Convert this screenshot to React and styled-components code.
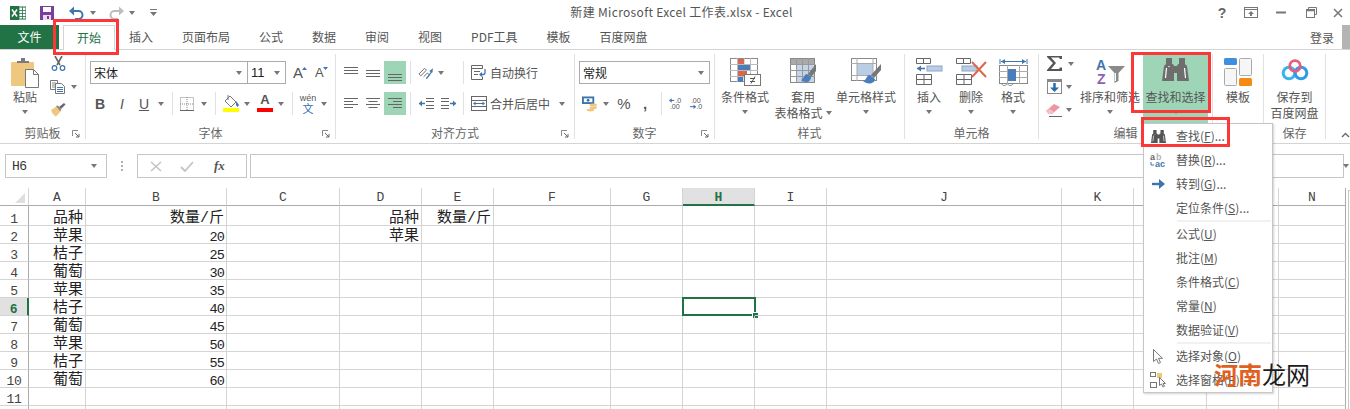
import { Fragment } from "react";
import styled, { createGlobalStyle } from "styled-components";

const GlobalStyle = createGlobalStyle`
  html, body {
    margin: 0;
    padding: 0;
    background: #fff;
    overflow: hidden;
  }
  body {
    font-family: "Noto Sans CJK SC", "Liberation Sans", sans-serif;
    font-size: 12px;
    color: #444;
  }
`;

const Page = styled.div`
  position: relative;
  width: 1350px;
  height: 409px;
  overflow: hidden;
  background: #fff;
`;

/* title bar */
const TitleBar = styled.div`
  position: relative;
  height: 25px;
  display: flex;
  align-items: center;
`;

const QuickAccess = styled.div`
  display: flex;
  align-items: center;
  padding-left: 10px;
`;

const QuickTool = styled.div`
  display: flex;
  margin-left: ${(p) => p.$ml || 0}px;
`;

const TitleText = styled.div`
  position: absolute;
  left: 0;
  right: 0;
  top: 3px;
  padding-left: 13px;
  text-align: center;
  line-height: 18px;
  color: #555;
  font-size: 12px;
  letter-spacing: 0.33px;
`;

const WindowControls = styled.div`
  margin-left: auto;
  display: flex;
  align-items: center;
  gap: 0;
  color: #666;
`;

const WindowButton = styled.div`
  width: ${(p) => p.$w || 30}px;
  display: flex;
  justify-content: center;
  font-family: "Liberation Sans", sans-serif;
  font-weight: 700;
  font-size: 14px;
  line-height: 16px;
`;

/* tabs */
const TabRow = styled.div`
  height: 25px;
  box-sizing: border-box;
  display: flex;
  align-items: stretch;
  position: relative;
  border-bottom: 1px solid #d4d4d4;
`;

const FileTab = styled.div`
  width: 59px;
  padding-bottom: 1px;
  box-sizing: border-box;
  background: #217346;
  color: #fff;
  display: flex;
  align-items: center;
  justify-content: center;
`;

const ActiveTab = styled.div`
  width: 52px;
  margin-left: 4px;
  margin-bottom: -1px;
  padding-bottom: 2px;
  box-sizing: border-box;
  background: #fff;
  border: 1px solid #d4d4d4;
  border-bottom: none;
  color: #217346;
  display: flex;
  align-items: center;
  justify-content: center;
`;

const TabList = styled.div`
  display: flex;
  gap: 29px;
  align-items: center;
  margin-left: 14px;
  padding-bottom: 2px;
  color: #555;
`;

const UserArea = styled.div`
  margin-left: auto;
  display: flex;
  align-items: center;
  gap: 8px;
  color: #555;
`;

const Avatar = styled.div`
  width: 8px;
  height: 24px;
  background: #b4b4b4;
`;

/* ribbon */
const Ribbon = styled.div`
  height: 94px;
  padding-top: 4px;
  box-sizing: border-box;
  display: flex;
  border-bottom: 1px solid #d4d4d4;
`;

const Group = styled.section`
  width: ${(p) => p.$w}px;
  height: 85px;
  box-sizing: border-box;
  border-right: 1px solid #e1e1e1;
  display: flex;
  flex-direction: column;
  flex-shrink: 0;
`;

const GroupBody = styled.div`
  height: 72px;
  display: flex;
  padding-left: ${(p) => p.$pl || 0}px;
`;

const RowsBody = styled.div`
  height: 72px;
  padding: 7px 0 0 4px;
  box-sizing: border-box;
  display: flex;
  flex-direction: column;
  gap: 8px;
`;

const ToolRow = styled.div`
  height: 23px;
  display: flex;
  align-items: center;
`;

const GroupLabel = styled.div`
  height: 13px;
  line-height: 13px;
  display: grid;
  grid-template-columns: 1fr auto 1fr;
  align-items: center;
  color: #666;
`;

const LabelText = styled.span`
  grid-column: 2;
  white-space: nowrap;
`;

const Launcher = styled.svg`
  grid-column: 3;
  justify-self: end;
  width: 8px;
  height: 8px;
  margin: 3px 5px 0 0;
`;

const BigButton = styled.div`
  width: ${(p) => p.$w}px;
  margin-left: ${(p) => p.$ml || 0}px;
  flex-shrink: 0;
  display: flex;
  flex-direction: column;
  align-items: center;
  padding-top: 4px;
  box-sizing: border-box;
  background: ${(p) => (p.$on ? "#9fd5b7" : "transparent")};
  color: #555;
`;

const BigIcon = styled.div`
  height: 31px;
  display: flex;
  justify-content: center;
`;

const BigLabel = styled.div`
  line-height: 16px;
  text-align: center;
  white-space: nowrap;
  display: flex;
  align-items: center;
  gap: 3px;
`;

const Caret = styled.i`
  display: block;
  flex-shrink: 0;
  width: 0;
  height: 0;
  border-left: 3.5px solid transparent;
  border-right: 3.5px solid transparent;
  border-top: 4px solid #777;
  margin-left: ${(p) => p.$ml || 0}px;
  margin-top: ${(p) => p.$mt || 0}px;
`;

const Stack = styled.div`
  width: ${(p) => p.$w}px;
  margin-top: -2px;
  padding-left: ${(p) => p.$pl || 0}px;
  box-sizing: border-box;
  flex-shrink: 0;
`;

const Tool = styled.div`
  width: ${(p) => p.$w || 16}px;
  height: 23px;
  margin-left: ${(p) => p.$ml || 0}px;
  flex-shrink: 0;
  display: flex;
  align-items: center;
  justify-content: center;
  background: ${(p) => (p.$on ? "#9fd5b7" : "transparent")};
  color: #555;
`;

const Sep = styled.div`
  width: 1px;
  height: 23px;
  margin-left: ${(p) => p.$ml || 0}px;
  background: #e1e1e1;
  flex-shrink: 0;
`;

const ComboBox = styled.div`
  width: ${(p) => p.$w}px;
  height: 23px;
  margin-left: ${(p) => p.$ml || 0}px;
  box-sizing: border-box;
  border: 1px solid #ababab;
  background: #fff;
  display: flex;
  align-items: center;
  justify-content: space-between;
  padding: 0 5px 0 3px;
  color: #222;
  font-size: 12px;
`;

const SizeText = styled.span`
  font-family: "Liberation Sans", sans-serif;
  font-size: 13px;
`;

const FormatLetter = styled.span`
  font-family: "Liberation Sans", sans-serif;
  font-size: ${(p) => p.$size || 14}px;
  font-weight: ${(p) => (p.$bold ? 700 : 400)};
  font-style: ${(p) => (p.$italic ? "italic" : "normal")};
  text-decoration: ${(p) => (p.$under ? "underline" : "none")};
  color: #555;
  line-height: 16px;
`;

const GrowTool = styled.div`
  width: 14px;
  height: 23px;
  margin-left: ${(p) => p.$ml || 0}px;
  flex-shrink: 0;
  display: flex;
  align-items: center;
`;

const GrowMark = styled.svg`
  width: 5px;
  height: 3px;
  margin: 0 0 9px -1px;
  flex-shrink: 0;
`;

const ColorTool = styled.div`
  width: 16px;
  height: 23px;
  margin-left: ${(p) => p.$ml || 0}px;
  display: flex;
  flex-direction: column;
  align-items: center;
  justify-content: flex-end;
  padding-bottom: 3px;
  box-sizing: border-box;
  flex-shrink: 0;
`;

const ColorBar = styled.div`
  width: 16px;
  height: 4px;
  background: ${(p) => p.$color};
`;

const WenTool = styled.div`
  width: 18px;
  margin-left: ${(p) => p.$ml || 0}px;
  display: flex;
  flex-direction: column;
  align-items: center;
  line-height: 10px;
  font-size: 9px;
  font-family: "Liberation Sans", sans-serif;
  color: #555;
`;

const WenChar = styled.span`
  font-family: "Noto Sans CJK SC", sans-serif;
  font-size: 11px;
  line-height: 11px;
  color: #2b6cb0;
`;

const AlignText = styled.span`
  margin-left: 3px;
  color: #555;
  white-space: nowrap;
`;

const CollapseArrow = styled.svg`
  width: 9px;
  height: 6px;
  margin: 78px 0 0 15px;
`;

/* formula bar */
const FormulaBar = styled.div`
  height: 24px;
  margin: 10px 0;
  padding-left: 5px;
  display: flex;
  align-items: stretch;
`;

const NameBox = styled.div`
  width: 102px;
  box-sizing: border-box;
  border: 1px solid #c6c6c6;
  display: flex;
  align-items: center;
  justify-content: space-between;
  padding: 0 9px 0 6px;
  font-family: "Liberation Mono", monospace;
  font-size: 13px;
  letter-spacing: -0.5px;
  color: #333;
`;

const Dots = styled.div`
  width: 30px;
  display: flex;
  flex-direction: column;
  align-items: center;
  justify-content: center;
  gap: 2px;
`;

const Dot = styled.i`
  display: block;
  width: 2px;
  height: 2px;
  background: #b0b0b0;
`;

const FormulaButtons = styled.div`
  width: 110px;
  box-sizing: border-box;
  border: 1px solid #c6c6c6;
  display: flex;
  align-items: center;
  padding-left: 12px;
  gap: 18px;
`;

const FxText = styled.span`
  font-family: "Liberation Serif", serif;
  font-style: italic;
  font-weight: 700;
  font-size: 13px;
  color: #555;
  margin-left: 2px;
`;

const FormulaInput = styled.div`
  width: 1094px;
  margin-left: 3px;
  box-sizing: border-box;
  border: 1px solid #c6c6c6;
`;

const ExpandArrow = styled(Caret)`
  align-self: center;
  margin-left: -1px;
  border-left-width: 3px;
  border-right-width: 3px;
`;

/* sheet */
const Sheet = styled.div`
  display: flex;
  align-items: flex-start;
`;

const Grid = styled.div`
  display: grid;
  grid-template-columns: 29px 57px 141px 113px 82px 72px 117px 72px 72px 72px 235px 72px 73px 72px 67px;
  grid-template-rows: 18px 20px repeat(10, 18px) 18px;
  flex-shrink: 0;
`;

const Corner = styled.div`
  box-sizing: border-box;
  border-right: 1px solid #d4d4d4;
  border-bottom: 1px solid #ababab;
  display: flex;
  align-items: flex-end;
  justify-content: flex-end;
  padding: 0 3px 2px 0;
`;

const ColHead = styled.div`
  box-sizing: border-box;
  border-right: 1px solid ${(p) => (p.$last ? "#ababab" : "#d4d4d4")};
  border-bottom: ${(p) => (p.$on ? "2px solid #217346" : "1px solid #ababab")};
  background: ${(p) => (p.$on ? "#e1e1e1" : "#fff")};
  color: ${(p) => (p.$on ? "#217346" : "#444")};
  font-weight: ${(p) => (p.$on ? 700 : 400)};
  font-family: "Liberation Mono", monospace;
  font-size: 13px;
  text-align: center;
  line-height: 19px;
`;

const RowHead = styled.div`
  box-sizing: border-box;
  border-right: ${(p) => (p.$on ? "2px solid #217346" : "1px solid #ababab")};
  border-bottom: 1px solid #d4d4d4;
  background: ${(p) => (p.$on ? "#e1e1e1" : "#fff")};
  color: ${(p) => (p.$on ? "#217346" : "#444")};
  font-weight: ${(p) => (p.$on ? 700 : 400)};
  font-family: "Liberation Mono", monospace;
  font-size: 13px;
  letter-spacing: -0.4px;
  display: flex;
  align-items: flex-end;
  justify-content: center;
  line-height: 10px;
`;

/* excel keeps cell text on the bottom of the row */
const Cell = styled.div`
  position: relative;
  box-sizing: border-box;
  border-right: 1px solid ${(p) => (p.$last ? "#ababab" : "#d4d4d4")};
  border-bottom: 1px solid #d4d4d4;
  padding-right: 2px;
  display: flex;
  align-items: flex-end;
  justify-content: flex-end;
  color: #222;
  white-space: nowrap;
  font-family: "Liberation Mono", "Noto Sans CJK SC", monospace;
  font-size: 15px;
  line-height: 12px;
  ${(p) =>
    p.$num &&
    `
    font-size: 13.5px;
    letter-spacing: -0.9px;
    line-height: 11px;
  `}
`;

const Selection = styled.div`
  position: absolute;
  left: -1px;
  top: -1px;
  right: -2px;
  bottom: -1px;
  border: 2px solid #217346;
`;

const FillHandle = styled.div`
  position: absolute;
  right: -4px;
  bottom: -4px;
  width: 5px;
  height: 5px;
  background: #217346;
  border: 1px solid #fff;
  border-right: none;
  border-bottom: none;
`;

const ScrollTrack = styled.div`
  width: 10px;
  height: 219px;
  margin: 2px 0 0 2px;
  border: 1px solid #c6c6c6;
  flex-shrink: 0;
`;

/* dropdown */
const Menu = styled.div`
  position: absolute;
  left: 1143px;
  top: 123px;
  width: 130px;
  height: 270px;
  box-sizing: border-box;
  background: #fff;
  border: 1px solid #c6c6c6;
  box-shadow: 1px 1px 2px rgba(0, 0, 0, 0.18);
`;

const MenuItem = styled.div`
  height: 24px;
  display: flex;
  align-items: center;
  color: #555;
  white-space: nowrap;
`;

const MenuIcon = styled.div`
  width: 32px;
  display: flex;
  justify-content: center;
  flex-shrink: 0;
  padding-right: 4px;
  box-sizing: border-box;
`;

const MenuText = styled.span`
  margin-top: -2px;
`;

const MenuSep = styled.div`
  height: 2px;
  margin-left: 33px;
  margin-right: 1px;
  background: #e4e4e4;
  transform: scaleY(0.5);
`;

/* annotations on top of the screenshot */
const RedFrame = styled.div`
  position: absolute;
  left: ${(p) => p.$x}px;
  top: ${(p) => p.$y}px;
  width: ${(p) => p.$w}px;
  height: ${(p) => p.$h}px;
  box-sizing: border-box;
  border: 3px solid #fb3737;
`;

const Watermark = styled.div`
  position: absolute;
  left: 1214px;
  top: 358px;
  font-size: 24px;
  line-height: 32px;
  color: #1c1c1c;
  white-space: nowrap;
`;

const WatermarkAccent = styled.span`
  color: #e0601e;
  font-weight: 700;
`;

const Mirror = styled.svg`
  transform: ${(p) => (p.$flip ? "scaleX(-1)" : "none")};
`;

/* icons */
const ExcelLogo = () => (
  <svg width="16" height="14" viewBox="0 0 16 14">
    <rect x="6" y="1" width="10" height="12" fill="#fff" stroke="#217346" />
    <path d="M9 1v12M12.5 1v12M6 4.5h10M6 7.5h10M6 10.5h10" stroke="#217346" strokeWidth="0.8" />
    <rect x="0" y="0" width="9" height="14" fill="#217346" />
    <path d="M2 3.5l5 7M7 3.5l-5 7" stroke="#fff" strokeWidth="1.5" />
  </svg>
);

const SaveIcon = () => (
  <svg width="14" height="14" viewBox="0 0 14 14">
    <path d="M0 0h14v14H0z" fill="#7a3e9d" />
    <rect x="3" y="1" width="8" height="5" fill="#fff" />
    <rect x="3" y="9" width="8" height="5" fill="#e9def0" />
    <rect x="7" y="10" width="2" height="3" fill="#7a3e9d" />
  </svg>
);

const UndoIcon = ({ color = "#3f75ae", flip }) => (
  <Mirror width="15" height="14" viewBox="0 0 15 14" $flip={flip}>
    <path d="M2 5h7.5a4 4 0 0 1 0 8H6" fill="none" stroke={color} strokeWidth="2" />
    <path d="M5 0.5v9L0 5z" fill={color} />
  </Mirror>
);

const CustomizeIcon = () => (
  <svg width="7" height="7" viewBox="0 0 7 7">
    <path d="M0 0h7v1H0z" fill="#777" />
    <path d="M0 3h7L3.5 7z" fill="#777" />
  </svg>
);

const RibbonDisplayIcon = () => (
  <svg width="14" height="11" viewBox="0 0 14 11">
    <rect x="0.5" y="0.5" width="13" height="10" fill="none" stroke="#777" />
    <path d="M0 2.5h14" stroke="#777" />
    <path d="M7 4l3 3H8v2H6V7H4z" fill="#777" />
  </svg>
);

const MinimizeIcon = () => (
  <svg width="10" height="3" viewBox="0 0 10 3">
    <rect width="10" height="2" y="0.5" fill="#777" />
  </svg>
);

const RestoreIcon = () => (
  <svg width="11" height="11" viewBox="0 0 11 11">
    <path d="M2.5 2.5V0.5h8v7H8.5" fill="none" stroke="#777" />
    <rect x="0.5" y="2.5" width="8" height="8" fill="#fff" stroke="#777" />
    <path d="M0 3.5h9" stroke="#777" strokeWidth="1.5" />
  </svg>
);

const CloseIcon = () => (
  <svg width="10" height="10" viewBox="0 0 10 10">
    <path d="M1 1l8 8M9 1l-8 8" stroke="#777" strokeWidth="1.5" />
  </svg>
);

const LauncherIcon = () => (
  <Launcher viewBox="0 0 8 8">
    <path d="M0.5 6V0.5H6" fill="none" stroke="#888" />
    <path d="M3 3l4 4M7 4v3H4" fill="none" stroke="#666" />
  </Launcher>
);

const PasteIcon = () => (
  <svg width="28" height="30" viewBox="0 0 28 30">
    <rect x="0" y="4" width="23" height="24" rx="1" fill="#edc87e" />
    <path d="M6 5V3h4V0h4v3h4v2z" fill="#7b7b7b" />
    <path d="M14.5 11.5h8l5 5v13h-13z" fill="#fff" stroke="#777" />
    <path d="M22.5 11.5v5h5" fill="none" stroke="#777" />
  </svg>
);

const ScissorsIcon = () => (
  <svg width="15" height="15" viewBox="0 0 15 15">
    <path d="M4 0l5 9M11 0L6 9" stroke="#666" strokeWidth="1.6" />
    <circle cx="3.5" cy="12" r="2.3" fill="none" stroke="#3f75ae" strokeWidth="1.2" />
    <circle cx="11.5" cy="12" r="2.3" fill="none" stroke="#3f75ae" strokeWidth="1.2" />
  </svg>
);

const CopyIcon = () => (
  <svg width="16" height="14" viewBox="0 0 16 14">
    <path d="M0.5 0.5h7v9h-7z" fill="#fff" stroke="#777" />
    <path d="M5.5 3.5h6l3 3v7h-9z" fill="#fff" stroke="#777" />
    <path d="M7 7.5h6M7 9.5h6M7 11.5h6" stroke="#3f75ae" />
    <path d="M2 3h4M2 5h3M2 7h3" stroke="#888" />
  </svg>
);

const BrushIcon = () => (
  <svg width="16" height="15" viewBox="0 0 16 15">
    <path d="M1 8l6-4 4 5-5 5.5-2-1 .5-1.5-1.5.5z" fill="#edc87e" />
    <path d="M6 4l4 5 1.5-1L8 3.5z" fill="#888" />
    <path d="M9 5l5-4 1.5 1.5L11 7z" fill="#666" />
  </svg>
);

const BorderIcon = () => (
  <svg width="14" height="14" viewBox="0 0 14 14">
    <path d="M0.5 0.5h13v13h-13zM7 0v14M0 7h14" fill="none" stroke="#888" strokeDasharray="1 1" />
    <path d="M0 13.5h14" stroke="#666" />
  </svg>
);

const FillIcon = () => (
  <svg width="16" height="13" viewBox="0 0 16 13">
    <path d="M7 1l6 6-5 5-6-6z" fill="#fff" stroke="#777" />
    <path d="M5 0v5" stroke="#777" />
    <path d="M13 6l3 4-1.5 2L13 10z" fill="#3f75ae" />
  </svg>
);

const AlignLines = ({ widths = [14, 14, 14], gap = 3, justify = "start", top = 0 }) => (
  <svg width="15" height="19" viewBox="0 0 15 19">
    {widths.map((w, i) => {
      const x = justify === "center" ? (14 - w) / 2 : justify === "end" ? 14 - w : 0;
      return <rect key={i} x={x} y={top + i * gap} width={w} height="1" fill="#666" />;
    })}
  </svg>
);

const OrientIcon = () => (
  <svg width="17" height="16" viewBox="0 0 17 16">
    <path d="M1 9l6-6 2 2-6 6zM6 12l4-4 2 2-3 4" fill="none" stroke="#666" />
    <path d="M9 14L15 6" stroke="#3f75ae" strokeWidth="1.2" />
    <path d="M16 3l-1 5-3-2z" fill="#3f75ae" />
  </svg>
);

const IndentIcon = ({ flip }) => (
  <Mirror width="15" height="13" viewBox="0 0 15 13" $flip={flip}>
    <path d="M7 1.5h8M7 4.5h8M7 8.5h8M7 11.5h8" stroke="#666" />
    <path d="M0 6.5h6" stroke="#3f75ae" strokeWidth="1.5" />
    <path d="M0 6.5l3-3v6z" fill="#3f75ae" />
  </Mirror>
);

const WrapIcon = () => (
  <svg width="16" height="15" viewBox="0 0 16 15">
    <path d="M0.5 0.5h11v3h-11zM0.5 3.5h11M0.5 3.5v11h11v-3" fill="none" stroke="#666" />
    <path d="M3 6.5h6M3 9.5h4" stroke="#666" />
    <path d="M14 4v3.5a2 2 0 0 1-2 2H9" fill="none" stroke="#3f75ae" strokeWidth="1.3" />
    <path d="M8 9.5l3-2.5v5z" fill="#3f75ae" />
  </svg>
);

const MergeIcon = () => (
  <svg width="16" height="15" viewBox="0 0 16 15">
    <rect x="0.5" y="0.5" width="15" height="14" fill="#fff" stroke="#666" />
    <path d="M0 4.5h16M0 10.5h16" stroke="#666" />
    <path d="M3 7.5h10" stroke="#3f75ae" />
    <path d="M2 7.5l2.5-2v4zM14 7.5l-2.5-2v4z" fill="#3f75ae" />
  </svg>
);

const AccountingIcon = () => (
  <svg width="17" height="16" viewBox="0 0 17 16">
    <rect x="0" y="0" width="13" height="8" fill="#3f75ae" />
    <rect x="2" y="2" width="9" height="4" fill="#fff" />
    <circle cx="6.5" cy="4" r="1.5" fill="#3f75ae" />
    <ellipse cx="12" cy="9" rx="4" ry="1.5" fill="#edc87e" />
    <ellipse cx="12" cy="12" rx="4" ry="1.5" fill="#edc87e" />
    <ellipse cx="9" cy="14.5" rx="4" ry="1.5" fill="#edc87e" />
  </svg>
);

const DecimalIcon = ({ more }) => (
  <svg width="18" height="18" viewBox="0 0 18 18" fontFamily="Liberation Sans, sans-serif" fontSize="8" fill="#555">
    <text x={more ? 1 : 7} y="8">{more ? ".00" : ".0"}</text>
    <text x={more ? 7 : 1} y="15">{more ? ".0" : ".00"}</text>
    <path d={more ? "M0 12h6" : "M1 5h5"} stroke="#3f75ae" strokeWidth="1.2" />
    <path d={more ? "M7 12l-3-2.5v5z" : "M0 5l3-2.5v5z"} fill="#3f75ae" />
  </svg>
);

const CondFormatIcon = () => (
  <svg width="31" height="28" viewBox="0 0 31 28">
    <rect x="0.5" y="0.5" width="27" height="23" fill="#fff" stroke="#888" />
    <path d="M7.5 0v24M14 0v24M20.5 0v24M0 6.5h28M0 12.5h28M0 18.5h28" stroke="#bbb" />
    <rect x="8" y="1" width="6" height="5" fill="#d9664a" />
    <rect x="8" y="7" width="12" height="5" fill="#4a7ebb" />
    <rect x="8" y="13" width="9" height="5" fill="#d9664a" />
    <rect x="8" y="19" width="5" height="5" fill="#4a7ebb" />
    <rect x="14.5" y="16.5" width="16" height="11" fill="#fff" stroke="#777" />
    <path d="M20 20.5h5M20 23.5h5M25 18.5l-4 7" stroke="#555" />
  </svg>
);

const TableFormatIcon = () => (
  <svg width="26" height="28" viewBox="0 0 26 28">
    <rect x="0.5" y="0.5" width="24" height="24" fill="#fff" stroke="#888" />
    <rect x="1" y="1" width="23" height="5" fill="#aaa" />
    <rect x="7" y="7" width="17" height="17" fill="#c5d5e8" />
    <path d="M6.5 0v25M12.5 0v25M18.5 0v25M0 6.5h25M0 12.5h25M0 18.5h25" stroke="#999" />
    <path d="M26 6l-8 10 3 3 5-6z" fill="#777" />
    <path d="M17 16c-3 0-3 5-6 6 3 3 10 3 10-3z" fill="#4a7ebb" />
  </svg>
);

const CellStyleIcon = () => (
  <svg width="30" height="28" viewBox="0 0 30 28">
    <rect x="0.5" y="0.5" width="25" height="22" fill="#fff" stroke="#888" />
    <rect x="6" y="6" width="16" height="11" fill="#b9cde5" />
    <path d="M0 5.5h26M6 0v23M22 0v23M0 17.5h26" stroke="#aaa" />
    <path d="M30 6l-10 11 3 3 7-8z" fill="#777" />
    <path d="M19 17c-4 0-3 5-7 6 4 4 12 3 12-2z" fill="#4a7ebb" />
  </svg>
);

const InsertCellsIcon = () => (
  <svg width="27" height="27" viewBox="0 0 27 27">
    <path d="M0.5 0.5h14v5h-14zM7.5 0v5M0.5 16.5h15v10h-15zM8 16v11M0 21.5h16" fill="none" stroke="#666" />
    <rect x="11" y="8" width="15" height="5" fill="#b9cde5" stroke="#8aa6c8" />
    <path d="M1 10.5h8" stroke="#3f75ae" strokeWidth="1.5" />
    <path d="M1 10.5l4-3v6z" fill="#3f75ae" />
  </svg>
);

const DeleteCellsIcon = () => (
  <svg width="31" height="27" viewBox="0 0 31 27">
    <path d="M0.5 0.5h14v5h-14zM7.5 0v5M0.5 16.5h15v10h-15zM8 16v11M0 21.5h16" fill="none" stroke="#666" />
    <rect x="6" y="8" width="15" height="5" fill="#b9cde5" stroke="#8aa6c8" />
    <path d="M16 4l14 15M30 4L16 19" stroke="#e0664a" strokeWidth="2" />
  </svg>
);

const FormatCellsIcon = () => (
  <svg width="29" height="29" viewBox="0 0 29 29">
    <path d="M1 1v5M28 1v5M2 3.5h25" stroke="#3f75ae" />
    <path d="M2 3.5l4-2.5v5zM27 3.5l-4-2.5v5z" fill="#3f75ae" />
    <rect x="0.5" y="7.5" width="28" height="18" fill="#fff" stroke="#888" />
    <path d="M8.5 7v19M20.5 7v19M0 13.5h29M0 19.5h29" stroke="#aaa" />
    <rect x="9" y="11" width="8" height="12" fill="#4a7ebb" />
    <path d="M3 26c0 2 4 2 5 0M9 26c0 2 4 2 5 0" fill="none" stroke="#888" />
  </svg>
);

const SigmaIcon = () => (
  <svg width="15" height="15" viewBox="0 0 15 15">
    <path d="M0 0h15v3H13l-1-1.5H4L9 7l-5 6h8l1-1.5h2V15H0v-1l6-7L0 1z" fill="#555" />
  </svg>
);

const FillDownIcon = () => (
  <svg width="15" height="15" viewBox="0 0 15 15">
    <rect x="0.5" y="0.5" width="14" height="14" fill="#fff" stroke="#888" />
    <rect x="0" y="0" width="15" height="3" fill="#888" />
    <path d="M7.5 4v7" stroke="#2b6cb0" strokeWidth="2.5" />
    <path d="M3 8.5h9L7.5 13z" fill="#2b6cb0" />
  </svg>
);

const EraserIcon = () => (
  <svg width="16" height="14" viewBox="0 0 16 14">
    <path d="M0 8l8-7 6 3-8 7H3z" fill="#eb96a0" />
    <path d="M0 8l3 3h3l2-2-4-3z" fill="#f4bfc6" />
    <path d="M3 13.5h13" stroke="#666" />
  </svg>
);

const SortFilterIcon = () => (
  <svg width="29" height="31" viewBox="0 0 29 31" fontFamily="Liberation Sans, sans-serif" fontWeight="700" fontSize="14">
    <text x="0" y="12" fill="#3f75ae">A</text>
    <text x="1" y="26" fill="#8a63b3">Z</text>
    <path d="M12 8h17l-6.5 7v8l-4 2V15z" fill="#8a8a8a" />
    <path d="M19.5 15v8" stroke="#fff" />
  </svg>
);

const Binoculars = ({ width = 27, height = 23, color = "#6e6e6e" }) => (
  <svg width={width} height={height} viewBox="0 0 27 23">
    <path d="M4 0h6v6h1l1 2h3l1-2h1V0h6v6l2 2 2 15H15v-8h-3v8H0L2 8l2-2z" fill={color} />
    <path d="M4.5 10l-1 10M7 8v1M22.5 10l1 10" stroke="#fff" strokeWidth="1.2" fill="none" />
  </svg>
);

const TemplateIcon = () => (
  <svg width="28" height="28" viewBox="0 0 28 28">
    <rect x="0" y="0" width="13" height="7" rx="1.5" fill="#3f8fe0" />
    <rect x="15.5" y="0.5" width="12" height="17" rx="1" fill="#f6f6f6" stroke="#aaa" />
    <rect x="0.5" y="10.5" width="12" height="17" rx="1" fill="#f6f6f6" stroke="#aaa" />
    <rect x="15" y="20" width="13" height="8" rx="1.5" fill="#f68a13" />
  </svg>
);

const BaiduIcon = () => (
  <svg width="28" height="24" viewBox="0 0 28 24" fill="none">
    <circle cx="8" cy="15" r="5.8" stroke="#3ab5ea" strokeWidth="3" />
    <circle cx="20" cy="15" r="5.8" stroke="#2f9be6" strokeWidth="3" />
    <circle cx="14" cy="8" r="5.3" stroke="#ee5a7c" strokeWidth="2.8" />
  </svg>
);

const ReplaceIcon = () => (
  <svg width="16" height="19" viewBox="0 0 16 19" fontFamily="Liberation Sans, sans-serif" fontWeight="700" fontSize="9">
    <text x="0" y="9" fill="#666">a</text>
    <text x="6" y="9" fill="#b5b5b5">b</text>
    <text x="5" y="16" fill="#3f75ae">ac</text>
    <path d="M1 11v3h3" fill="none" stroke="#3f75ae" />
  </svg>
);

const GoArrowIcon = () => (
  <svg width="13" height="10" viewBox="0 0 13 10">
    <path d="M0 5h10" stroke="#3f75ae" strokeWidth="2.4" />
    <path d="M7 0l6 5-6 5z" fill="#3f75ae" />
  </svg>
);

const PointerIcon = () => (
  <svg width="10" height="15" viewBox="0 0 10 15">
    <path d="M0.5 0.5v12l3-2.5 2 4.5 2-1-2-4.2h4z" fill="#fff" stroke="#777" />
  </svg>
);

const PaneIcon = () => (
  <svg width="17" height="16" viewBox="0 0 17 16">
    <rect x="0.5" y="0.5" width="5" height="4" fill="none" stroke="#777" />
    <rect x="0.5" y="10.5" width="6" height="5" fill="none" stroke="#777" />
    <rect x="7" y="1" width="5" height="5" fill="#edc87e" />
    <path d="M9.5 5.5v8l2-1.5 1.5 3 1.5-.8-1.5-2.7h2.5z" fill="#fff" stroke="#777" />
  </svg>
);

const CornerMark = () => (
  <svg width="10" height="10" viewBox="0 0 10 10">
    <path d="M10 0v10H0z" fill="#dfdfdf" />
  </svg>
);

const FontSizeTool = ({ up, ml }) => (
  <GrowTool $ml={ml}>
    <FormatLetter $size={up ? 15 : 13}>A</FormatLetter>
    <GrowMark viewBox="0 0 5 3">
      <path d={up ? "M0 3l2.5-3L5 3z" : "M0 0h5L2.5 3z"} fill="#3f75ae" />
    </GrowMark>
  </GrowTool>
);

const TABS = ["插入", "页面布局", "公式", "数据", "审阅", "视图", "PDF工具", "模板", "百度网盘"];
const COLUMNS = ["A", "B", "C", "D", "E", "F", "G", "H", "I", "J", "K", "L", "M", "N"];

const ROWS = [
  { A: "品种", B: "数量/斤", D: "品种", E: "数量/斤" },
  { A: "苹果", B: 20, D: "苹果" },
  { A: "桔子", B: 25 },
  { A: "葡萄", B: 30 },
  { A: "苹果", B: 35 },
  { A: "桔子", B: 40 },
  { A: "葡萄", B: 45 },
  { A: "苹果", B: 50 },
  { A: "桔子", B: 55 },
  { A: "葡萄", B: 60 },
  {},
  {},
];

const MENU_TOP = [
  { label: "查找", key: "F", tail: "...", icon: <Binoculars width={15} height={13} color="#555" /> },
  { label: "替换", key: "R", tail: "...", icon: <ReplaceIcon /> },
  { label: "转到", key: "G", tail: "...", icon: <GoArrowIcon /> },
  { label: "定位条件", key: "S", tail: "..." },
];

const MENU_MIDDLE = [
  { label: "公式", key: "U" },
  { label: "批注", key: "M" },
  { label: "条件格式", key: "C" },
  { label: "常量", key: "N" },
  { label: "数据验证", key: "V" },
];

const MENU_BOTTOM = [
  { label: "选择对象", key: "O", icon: <PointerIcon /> },
  { label: "选择窗格", key: "P", tail: "...", icon: <PaneIcon /> },
];

function MenuEntries({ items }) {
  return items.map((item) => (
    <MenuItem key={item.label}>
      <MenuIcon>{item.icon}</MenuIcon>
      <MenuText>
        {item.label}(<u>{item.key}</u>){item.tail}
      </MenuText>
    </MenuItem>
  ));
}

function AlignGroupRows() {
  return (
    <RowsBody>
      <ToolRow>
        <Tool $w={22}><AlignLines top={4} /></Tool>
        <Tool $w={22}><AlignLines top={7} /></Tool>
        <Tool $w={22} $on><AlignLines top={11} /></Tool>
        <Sep $ml={4} />
        <Tool $ml={7}><OrientIcon /></Tool>
        <Tool $w={8} $ml={3}><Caret /></Tool>
        <Sep $ml={18} />
        <Tool $ml={7}><WrapIcon /></Tool>
        <AlignText>自动换行</AlignText>
      </ToolRow>
      <ToolRow>
        <Tool $w={22}><AlignLines widths={[14, 9, 14, 9]} top={4} /></Tool>
        <Tool $w={22}><AlignLines widths={[14, 9, 14, 9]} justify="center" top={4} /></Tool>
        <Tool $w={22} $on><AlignLines widths={[14, 9, 14, 9]} justify="end" top={4} /></Tool>
        <Sep $ml={4} />
        <Tool $ml={7}><IndentIcon /></Tool>
        <Tool $w={15} $ml={7}><IndentIcon flip /></Tool>
        <Sep $ml={7} />
        <Tool $ml={7}><MergeIcon /></Tool>
        <AlignText>合并后居中</AlignText>
        <Tool $w={8} $ml={8}><Caret /></Tool>
      </ToolRow>
    </RowsBody>
  );
}

export default function App() {
  return (
    <Page>
      <GlobalStyle />
      <TitleBar>
        <QuickAccess>
          <ExcelLogo />
          <QuickTool $ml={14}><SaveIcon /></QuickTool>
          <QuickTool $ml={15}><UndoIcon /></QuickTool>
          <Caret $ml={6} />
          <QuickTool $ml={13}><UndoIcon color="#bdbdbd" flip /></QuickTool>
          <Caret $ml={5} />
          <QuickTool $ml={15}><CustomizeIcon /></QuickTool>
        </QuickAccess>
        <TitleText>新建 Microsoft Excel 工作表.xlsx - Excel</TitleText>
        <WindowControls>
          <WindowButton $w={28}>?</WindowButton>
          <WindowButton><RibbonDisplayIcon /></WindowButton>
          <WindowButton><MinimizeIcon /></WindowButton>
          <WindowButton><RestoreIcon /></WindowButton>
          <WindowButton $w={24}><CloseIcon /></WindowButton>
        </WindowControls>
      </TitleBar>

      <TabRow>
        <FileTab>文件</FileTab>
        <ActiveTab>开始</ActiveTab>
        <TabList>
          {TABS.map((tab) => (
            <span key={tab}>{tab}</span>
          ))}
        </TabList>
        <UserArea>
          <span>登录</span>
          <Avatar />
        </UserArea>
      </TabRow>

      <Ribbon>
        <Group $w={86}>
          <GroupBody>
            <BigButton $w={50}>
              <BigIcon><PasteIcon /></BigIcon>
              <BigLabel>粘贴</BigLabel>
              <Caret $mt={5} />
            </BigButton>
            <Stack $w={36}>
              <ToolRow><Tool><ScissorsIcon /></Tool></ToolRow>
              <ToolRow><Tool><CopyIcon /></Tool><Tool $w={8} $ml={4}><Caret /></Tool></ToolRow>
              <ToolRow><Tool><BrushIcon /></Tool></ToolRow>
            </Stack>
          </GroupBody>
          <GroupLabel><LabelText>剪贴板</LabelText><LauncherIcon /></GroupLabel>
        </Group>

        <Group $w={250}>
          <RowsBody>
            <ToolRow>
              <ComboBox $w={158}>宋体<Caret /></ComboBox>
              <ComboBox $w={39} $ml={-1}><SizeText>11</SizeText><Caret /></ComboBox>
              <FontSizeTool up ml={7} />
              <FontSizeTool ml={8} />
            </ToolRow>
            <ToolRow>
              <Tool $w={20}><FormatLetter $bold>B</FormatLetter></Tool>
              <Tool $w={24}><FormatLetter $italic>I</FormatLetter></Tool>
              <Tool $w={20}><FormatLetter $under>U</FormatLetter></Tool>
              <Tool $w={14}><Caret /></Tool>
              <Sep $ml={4} />
              <Tool $w={27}><BorderIcon /></Tool>
              <Tool $w={8}><Caret /></Tool>
              <Sep $ml={7} />
              <ColorTool $ml={7}><FillIcon /><ColorBar $color="#ffff00" /></ColorTool>
              <Tool $w={8} $ml={4}><Caret /></Tool>
              <ColorTool $ml={6}><FormatLetter $bold $size={13}>A</FormatLetter><ColorBar $color="#ff0000" /></ColorTool>
              <Tool $w={8} $ml={4}><Caret /></Tool>
              <Sep $ml={7} />
              <WenTool $ml={6}>wén<WenChar>文</WenChar></WenTool>
              <Tool $w={8} $ml={3}><Caret /></Tool>
            </ToolRow>
          </RowsBody>
          <GroupLabel><LabelText>字体</LabelText><LauncherIcon /></GroupLabel>
        </Group>

        <Group $w={239}>
          <AlignGroupRows />
          <GroupLabel><LabelText>对齐方式</LabelText><LauncherIcon /></GroupLabel>
        </Group>

        <Group $w={140}>
          <RowsBody>
            <ToolRow>
              <ComboBox $w={131}>常规<Caret /></ComboBox>
            </ToolRow>
            <ToolRow>
              <Tool $ml={3}><AccountingIcon /></Tool>
              <Tool $w={8} $ml={4}><Caret /></Tool>
              <Tool $w={14} $ml={7}><FormatLetter $size={15}>%</FormatLetter></Tool>
              <Tool $w={14} $ml={7}><FormatLetter $bold $size={15}>,</FormatLetter></Tool>
              <Sep $ml={9} />
              <Tool $ml={7}><DecimalIcon /></Tool>
              <Tool $ml={5}><DecimalIcon more /></Tool>
            </ToolRow>
          </RowsBody>
          <GroupLabel><LabelText>数字</LabelText><LauncherIcon /></GroupLabel>
        </Group>

        <Group $w={190}>
          <GroupBody>
            <BigButton $w={60}>
              <BigIcon><CondFormatIcon /></BigIcon>
              <BigLabel>条件格式</BigLabel>
              <Caret $mt={5} />
            </BigButton>
            <BigButton $w={56}>
              <BigIcon><TableFormatIcon /></BigIcon>
              <BigLabel>套用</BigLabel>
              <BigLabel>表格格式<Caret /></BigLabel>
            </BigButton>
            <BigButton $w={70}>
              <BigIcon><CellStyleIcon /></BigIcon>
              <BigLabel>单元格样式</BigLabel>
              <Caret $mt={5} />
            </BigButton>
          </GroupBody>
          <GroupLabel><LabelText>样式</LabelText></GroupLabel>
        </Group>

        <Group $w={134}>
          <GroupBody $pl={3}>
            <BigButton $w={42}>
              <BigIcon><InsertCellsIcon /></BigIcon>
              <BigLabel>插入</BigLabel>
              <Caret $mt={5} />
            </BigButton>
            <BigButton $w={42}>
              <BigIcon><DeleteCellsIcon /></BigIcon>
              <BigLabel>删除</BigLabel>
              <Caret $mt={5} />
            </BigButton>
            <BigButton $w={42}>
              <BigIcon><FormatCellsIcon /></BigIcon>
              <BigLabel>格式</BigLabel>
              <Caret $mt={5} />
            </BigButton>
          </GroupBody>
          <GroupLabel><LabelText>单元格</LabelText></GroupLabel>
        </Group>

        <Group $w={174}>
          <GroupBody>
            <Stack $w={40} $pl={7}>
              <ToolRow><Tool><SigmaIcon /></Tool><Tool $w={8} $ml={5}><Caret /></Tool></ToolRow>
              <ToolRow><Tool><FillDownIcon /></Tool><Tool $w={8} $ml={3}><Caret /></Tool></ToolRow>
              <ToolRow><Tool><EraserIcon /></Tool><Tool $w={8} $ml={3}><Caret /></Tool></ToolRow>
            </Stack>
            <BigButton $w={60} $ml={1}>
              <BigIcon><SortFilterIcon /></BigIcon>
              <BigLabel>排序和筛选</BigLabel>
              <Caret $mt={5} />
            </BigButton>
            <BigButton $w={65} $ml={3} $on>
              <BigIcon><Binoculars /></BigIcon>
              <BigLabel>查找和选择</BigLabel>
              <Caret $mt={5} />
            </BigButton>
          </GroupBody>
          <GroupLabel><LabelText>编辑</LabelText></GroupLabel>
        </Group>

        <Group $w={51}>
          <GroupBody>
            <BigButton $w={50}>
              <BigIcon><TemplateIcon /></BigIcon>
              <BigLabel>模板</BigLabel>
            </BigButton>
          </GroupBody>
          <GroupLabel><LabelText>模板</LabelText></GroupLabel>
        </Group>

        <Group $w={62}>
          <GroupBody>
            <BigButton $w={61}>
              <BigIcon><BaiduIcon /></BigIcon>
              <BigLabel>保存到</BigLabel>
              <BigLabel>百度网盘</BigLabel>
            </BigButton>
          </GroupBody>
          <GroupLabel><LabelText>保存</LabelText></GroupLabel>
        </Group>

        <CollapseArrow viewBox="0 0 9 6">
          <path d="M1 5l3.5-3.5L8 5" fill="none" stroke="#666" strokeWidth="1.3" />
        </CollapseArrow>
      </Ribbon>

      <FormulaBar>
        <NameBox>H6<Caret /></NameBox>
        <Dots><Dot /><Dot /><Dot /></Dots>
        <FormulaButtons>
          <svg width="12" height="11" viewBox="0 0 12 11">
            <path d="M1 1l10 9M11 1L1 10" stroke="#c4c4c4" strokeWidth="1.6" />
          </svg>
          <svg width="14" height="11" viewBox="0 0 14 11">
            <path d="M1 6l4 4 8-9" fill="none" stroke="#c4c4c4" strokeWidth="1.8" />
          </svg>
          <FxText>fx</FxText>
        </FormulaButtons>
        <FormulaInput />
        <ExpandArrow />
      </FormulaBar>

      <Sheet>
        <Grid>
          <Corner><CornerMark /></Corner>
          {COLUMNS.map((col) => (
            <ColHead key={col} $on={col === "H"} $last={col === "N"}>{col}</ColHead>
          ))}
          {ROWS.map((row, i) => (
            <Fragment key={i}>
              <RowHead $on={i === 5}>{i < 11 ? i + 1 : ""}</RowHead>
              {COLUMNS.map((col) => (
                <Cell key={col} $num={typeof row[col] === "number"} $last={col === "N"}>
                  {row[col]}
                  {col === "H" && i === 5 && (
                    <Selection><FillHandle /></Selection>
                  )}
                </Cell>
              ))}
            </Fragment>
          ))}
        </Grid>
        <ScrollTrack />
      </Sheet>

      <Menu>
        <MenuEntries items={MENU_TOP} />
        <MenuSep />
        <MenuEntries items={MENU_MIDDLE} />
        <MenuSep />
        <MenuEntries items={MENU_BOTTOM} />
      </Menu>

      <RedFrame $x={53} $y={19} $w={66} $h={36} />
      <RedFrame $x={1131} $y={52} $w={80} $h={61} />
      <RedFrame $x={1141} $y={117} $w={89} $h={30} />

      <Watermark>
        <WatermarkAccent>河南</WatermarkAccent>龙网
      </Watermark>
    </Page>
  );
}
